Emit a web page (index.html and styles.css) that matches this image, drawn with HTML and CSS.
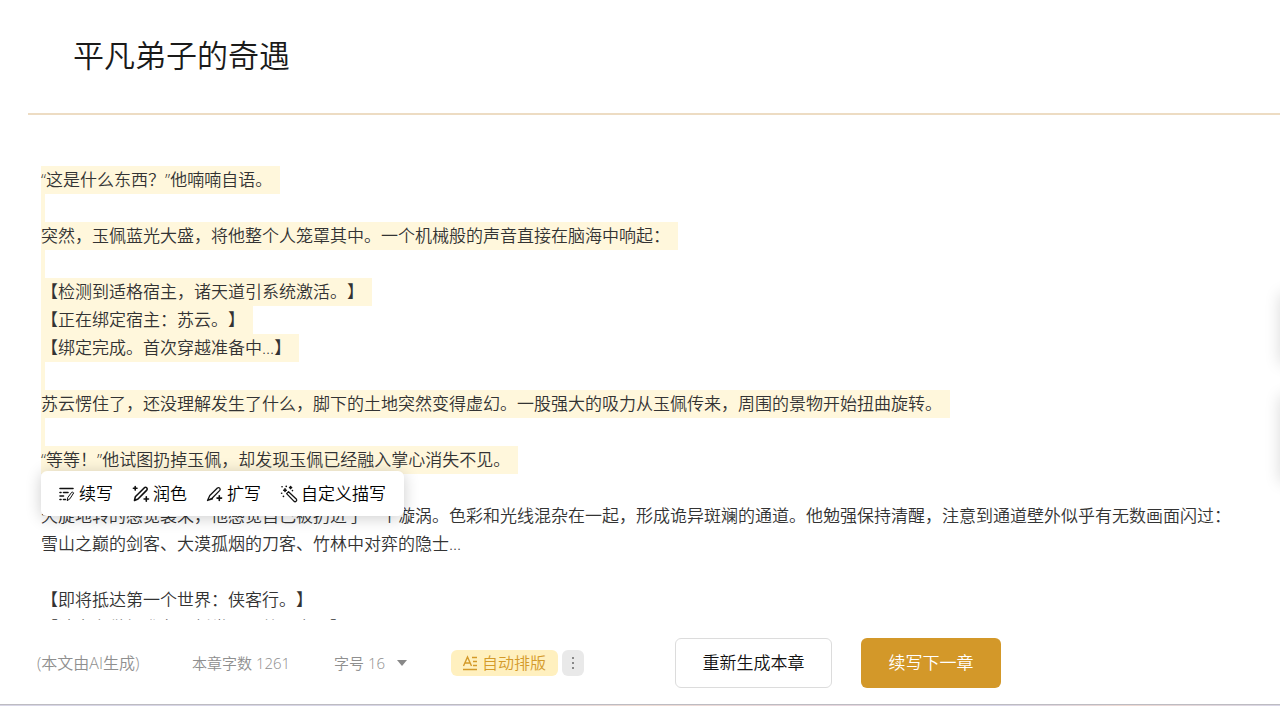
FILE: index.html
```html
<!DOCTYPE html>
<html lang="zh-CN">
<head>
<meta charset="utf-8">
<title>平凡弟子的奇遇</title>
<link rel="stylesheet" href="styles.css">
</head>
<body>
<div class="editor">
  <header class="chapter-head">
    <h1 class="chapter-title">平凡弟子的奇遇</h1>
  </header>

  <main class="chapter-body">
    <p class="line"><mark>“这是什么东西？”他喃喃自语。</mark></p>
    <p class="line"><mark class="blank"></mark></p>
    <p class="line"><mark>突然，玉佩蓝光大盛，将他整个人笼罩其中。一个机械般的声音直接在脑海中响起：</mark></p>
    <p class="line"><mark class="blank"></mark></p>
    <p class="line"><mark>【检测到适格宿主，诸天道引系统激活。】</mark></p>
    <p class="line"><mark>【正在绑定宿主：苏云。】</mark></p>
    <p class="line"><mark>【绑定完成。首次穿越准备中...】</mark></p>
    <p class="line"><mark class="blank"></mark></p>
    <p class="line"><mark>苏云愣住了，还没理解发生了什么，脚下的土地突然变得虚幻。一股强大的吸力从玉佩传来，周围的景物开始扭曲旋转。</mark></p>
    <p class="line"><mark class="blank"></mark></p>
    <div class="anchor">
      <p class="line"><mark>“等等！”他试图扔掉玉佩，却发现玉佩已经融入掌心消失不见。</mark></p>
      <div class="ai-menu" role="toolbar" aria-label="AI">
        <button class="ai-item" type="button">
          <svg class="icon" viewBox="0 0 18 18"><path class="bold" d="M2 3.5h13M2 7.5h1M5.5 7.5h4.5M2 11h3.5M2 14.5h1M5.5 14.5h2"/><path class="thin" d="M9.3 15.3l.5-2.8 3.9-5.2q1.2-.6 2 .6l-3.6 5.6z"/></svg>
          <span>续写</span>
        </button>
        <button class="ai-item" type="button">
          <svg class="icon" viewBox="0 0 18 18"><path class="bold" d="M2.5 15.5l.8-3.7L12.4 2.7q1.2-1 2.3.1t.1 2.3L6 14z"/><path class="bold" d="M3.2 1.5v3.6M1.4 3.3H5M14.3 11.8v4.4M12.1 14h4.4"/></svg>
          <span>润色</span>
        </button>
        <button class="ai-item" type="button">
          <svg class="icon" viewBox="0 0 18 18"><path d="M1.5 15.5l2.3-5L11.4 3q1.3-.9 2.3.1t.1 2.3L6.3 13zM1.5 15.5l5-1.5"/><path class="bold" d="M13.3 10.8v4.6M11 13.1h4.6"/></svg>
          <span>扩写</span>
        </button>
        <button class="ai-item" type="button">
          <svg class="icon" viewBox="0 0 18 18"><path d="M6.6 8.6l1.9-1.9 8 7.6q.6 1.2-.4 2t-2 .1z"/><path class="bold" d="M5 3.9v2.6M3.7 5.2h2.6M10.6 1.6v2M9.6 2.6h2M2 1.8h.1M6.2 1.4h.1M1.6 8.2h.1M3.4 11.4h.1M12.4 5.6h.1"/></svg>
          <span>自定义描写</span>
        </button>
      </div>
    </div>
    <p class="line"></p>
    <p class="line">天旋地转的感觉袭来，他感觉自己被扔进了一个漩涡。色彩和光线混杂在一起，形成诡异斑斓的通道。他勉强保持清醒，注意到通道壁外似乎有无数画面闪过：<br>雪山之巅的剑客、大漠孤烟的刀客、竹林中对弈的隐士...</p>
    <p class="line"></p>
    <p class="line">【即将抵达第一个世界：侠客行。】</p>
    <p class="line">【请宿主做好准备，新世界即将开启。】</p>
  </main>

  <footer class="bar">
    <span class="note">(本文由AI生成)</span>
    <span class="count">本章字数 1261</span>
    <button class="size" type="button">字号 16 <span class="caret"></span></button>
    <div class="layout-group">
      <button class="layout" type="button">
        <svg class="layout-icon" viewBox="0 0 16 16"><path d="M1.5 11L5.5 2l4 9M3 8h5M10 2.5h5M11 6.5h4M11 10.5h4M1 14.5h14"/></svg>
        <span>自动排版</span>
      </button>
      <button class="more" type="button" aria-label="更多">
        <svg class="dots" viewBox="0 0 4 12"><path d="M1 0h2v2H1zM1 5h2v2H1zM1 10h2v2H1z"/></svg>
      </button>
    </div>
    <button class="btn redo" type="button">重新生成本章</button>
    <button class="btn next" type="button">续写下一章</button>
  </footer>
  <div class="edge"></div>

  <div class="side-card side-card-top"></div>
  <div class="side-card side-card-bottom"></div>
</div>
</body>
</html>
```
FILE: styles.css
```css
* { box-sizing: border-box; }

body {
  margin: 0;
  background: #fff;
  color: #333;
  font-family: "Open Sans", "Noto Sans CJK SC", sans-serif;
  font-weight: 350;
  font-size: 17px;
  line-height: 28px;
  text-spacing-trim: space-all;
}

button {
  margin: 0;
  padding: 0;
  border: 0;
  background: none;
  color: inherit;
  font: inherit;
  cursor: pointer;
}

.editor {
  position: relative;
  display: flex;
  flex-direction: column;
  height: 100vh;
  overflow: hidden;
}

.chapter-head {
  flex: none;
  margin-left: 28px;
  padding: 32px 45px 34px;
  border-bottom: 2px solid #eddcc3;
}

.chapter-title {
  margin: 0;
  color: #1a1a1a;
  font-size: 31px;
  font-weight: 350;
  line-height: 47px;
}

.chapter-body {
  flex: 1;
  min-height: 0;
  overflow: hidden;
  padding: 51px 20px 0 41px;
}

.line {
  margin: 0;
  min-height: 28px;
}

mark {
  display: inline-block;
  padding-right: 8px;
  background: #fff7dc;
  color: inherit;
  vertical-align: top;
}

.blank {
  width: 4px;
  height: 28px;
  padding: 0;
}

.anchor { position: relative; }

.ai-menu {
  position: absolute;
  top: 25px;
  left: 0;
  display: flex;
  gap: 19px;
  padding: 9px 18px 8px 17px;
  border-radius: 6px;
  background: #fff;
  box-shadow: 0 2px 16px rgba(0, 0, 0, 0.2);
  color: #000;
}

.ai-item {
  display: flex;
  align-items: center;
  gap: 3px;
  white-space: nowrap;
}

.icon {
  width: 18px;
  height: 18px;
  fill: none;
  stroke: #111;
  stroke-width: 1.3;
  stroke-linecap: round;
  stroke-linejoin: round;
}

.icon .bold { stroke-width: 1.6; }

.icon .thin { stroke-width: 1; }

.bar {
  flex: none;
  display: flex;
  align-items: center;
  height: 84px;
  padding: 2px 0 0 37px;
  color: #8f8f8f;
  font-size: 16px;
  white-space: nowrap;
}

.edge {
  flex: none;
  height: 2px;
  border-top: 1px solid #bdbcc2;
  background: linear-gradient(90deg, #d8d6e6, #d8d6e6 35%, #efdcd4 50%, #e6d6de 66%, #d8d6e8 78%, #efd9d2 88%, #d8d6e6);
}

.note { width: 155px; }

.count {
  width: 142px;
  font-size: 15px;
}

.size {
  display: flex;
  align-items: center;
  gap: 12px;
  width: 117px;
  font-size: 15px;
}

.caret {
  border: 5px solid transparent;
  border-top: 6px solid #888;
  border-bottom: 0;
}

.layout-group {
  display: flex;
  gap: 4px;
  width: 224px;
}

.layout {
  display: flex;
  align-items: center;
  gap: 4px;
  height: 26px;
  padding: 0 12px 0 11px;
  border-radius: 6px;
  background: #fff0bf;
  color: #d49a2a;
}

.layout-icon {
  width: 16px;
  height: 16px;
  fill: none;
  stroke: #d49a2a;
  stroke-width: 1.4;
}

.more {
  display: flex;
  align-items: center;
  justify-content: center;
  width: 22px;
  height: 26px;
  border-radius: 6px;
  background: #e9e9e9;
}

.dots {
  width: 4px;
  height: 12px;
  fill: #888;
}

.btn {
  height: 50px;
  border-radius: 6px;
  font-size: 17px;
}

.redo {
  width: 157px;
  margin-right: 29px;
  border: 1px solid #dcdcdc;
  color: #111;
}

.next {
  width: 140px;
  background: #d39829;
  color: #fff;
}

.side-card {
  position: absolute;
  left: 100%;
  width: 40px;
  box-shadow: 0 0 16px rgba(0, 0, 0, 0.15);
}

.side-card-top { top: 294px; height: 70px; }

.side-card-bottom { top: 396px; height: 86px; }
```
